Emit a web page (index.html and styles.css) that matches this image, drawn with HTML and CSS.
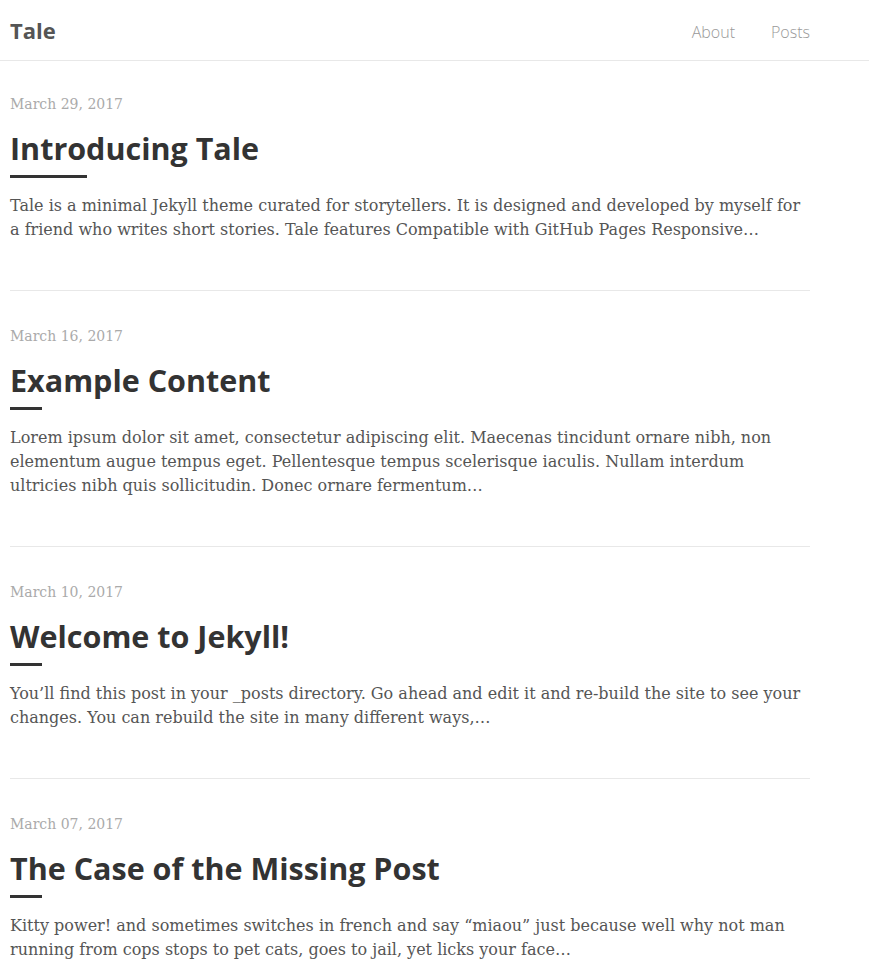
FILE: index.html
```html
<!DOCTYPE html>
<html lang="en">
<head>
<meta charset="utf-8">
<title>Tale</title>
<link rel="stylesheet" href="styles.css">
</head>
<body>
<header class="site-header">
  <div class="header-inner">
    <a class="site-title" href="#">Tale</a>
    <nav class="site-nav">
      <a href="#">About</a>
      <a href="#">Posts</a>
    </nav>
  </div>
</header>
<main class="posts">
  <article class="post first">
    <div class="post-date">March 29, 2017</div>
    <h1 class="post-title">Introducing Tale</h1>
    <div class="post-line long"></div>
    <p class="post-excerpt">Tale is a minimal Jekyll theme curated for storytellers. It is designed and developed by myself for a friend who writes short stories. Tale features Compatible with GitHub Pages Responsive…</p>
  </article>
  <article class="post">
    <div class="post-date">March 16, 2017</div>
    <h1 class="post-title">Example Content</h1>
    <div class="post-line"></div>
    <p class="post-excerpt">Lorem ipsum dolor sit amet, consectetur adipiscing elit. Maecenas tincidunt ornare nibh, non elementum augue tempus eget. Pellentesque tempus scelerisque iaculis. Nullam interdum ultricies nibh quis sollicitudin. Donec ornare fermentum…</p>
  </article>
  <article class="post">
    <div class="post-date">March 10, 2017</div>
    <h1 class="post-title">Welcome to Jekyll!</h1>
    <div class="post-line"></div>
    <p class="post-excerpt">You’ll find this post in your _posts directory. Go ahead and edit it and re-build the site to see your changes. You can rebuild the site in many different ways,…</p>
  </article>
  <article class="post">
    <div class="post-date">March 07, 2017</div>
    <h1 class="post-title">The Case of the Missing Post</h1>
    <div class="post-line"></div>
    <p class="post-excerpt">Kitty power! and sometimes switches in french and say “miaou” just because well why not man running from cops stops to pet cats, goes to jail, yet licks your face…</p>
  </article>
</main>
</body>
</html>
```
FILE: styles.css
```css
html, body {
  margin: 0;
  padding: 0;
  background: #fff;
}
body {
  font-family: "DejaVu Serif", "Liberation Serif", serif;
  color: #555;
}
a {
  text-decoration: none;
}
.site-header {
  border-bottom: 1px solid #e8e8e8;
}
.header-inner {
  width: 800px;
  margin-left: 10px;
  height: 60px;
  display: flex;
  align-items: center;
  justify-content: space-between;
}
.site-title {
  font-family: "Open Sans", Lato, sans-serif;
  font-weight: 700;
  font-size: 22px;
  color: #555;
}
.site-nav {
  display: flex;
  gap: 36px;
  padding-top: 4px;
}
.site-nav a {
  font-family: "Open Sans", Lato, sans-serif;
  font-weight: 300;
  font-size: 16px;
  color: #999;
}
.posts {
  width: 800px;
  margin-left: 10px;
}
.post {
  padding: 35px 0 48px;
  border-bottom: 1px solid #e8e8e8;
}
.post.first {
  padding-top: 33px;
}
.post:last-child {
  border-bottom: none;
}
.post-date {
  font-size: 14px;
  line-height: 20px;
  color: #aaa;
}
.post-title {
  margin: 14px 0 0;
  font-family: "Open Sans", Lato, sans-serif;
  font-weight: 700;
  font-size: 30.5px;
  line-height: 40px;
  color: #333;
}
.post-line {
  margin-top: 7px;
  width: 32px;
  height: 3px;
  background: #333;
}
.post-line.long {
  width: 77px;
}
.post-excerpt {
  margin: 16px 0 0;
  font-size: 16px;
  line-height: 24px;
}
```
